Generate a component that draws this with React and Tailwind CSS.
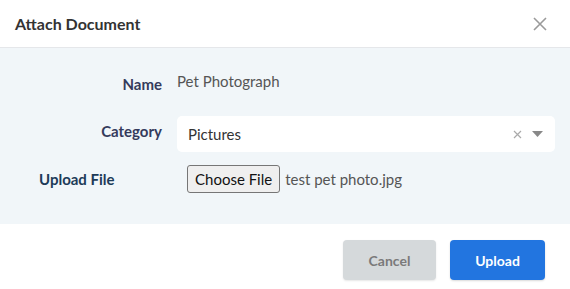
import React from "react";

export default function App() {
  return (
    <div className="w-[570px] h-[289px] bg-white flex flex-col" style={{ fontFamily: "Lato, 'Open Sans', sans-serif" }}>
      <div className="h-[48px] flex items-center justify-between pl-[15px] pr-[22px] border-b border-[#e5e7ea]">
        <div className="text-[16px] font-bold text-[#333] pt-[1px]">Attach Document</div>
        <svg width="16" height="16" viewBox="0 0 16 16" className="text-[#9a9a9a]">
          <path d="M2 2L14 14M14 2L2 14" stroke="currentColor" strokeWidth="1.6" />
        </svg>
      </div>
      <div className="h-[176px] bg-[#f1f6f9] flex flex-col pt-[20px]">
        <div className="flex items-center h-[30px]">
          <div className="w-[162px] text-right text-[15px] font-bold text-[#353b5c] pt-[2px]">Name</div>
          <div className="ml-[15px] text-[15px] text-[#555] -mt-[4px]">Pet Photograph</div>
        </div>
        <div className="flex items-center mt-[18px]">
          <div className="w-[162px] text-right text-[15px] font-bold text-[#353b5c] -mt-[6px]">Category</div>
          <div className="ml-[15px] w-[378px] h-[36px] bg-white rounded-[5px] flex items-center pl-[11px] pr-[12px]">
            <span className="text-[15px] text-[#333] flex-1">Pictures</span>
            <svg width="9" height="9" viewBox="0 0 9 9" className="text-[#aaa]">
              <path d="M1 1L8 8M8 1L1 8" stroke="currentColor" strokeWidth="1.2" />
            </svg>
            <svg width="11" height="6" viewBox="0 0 11 6" className="ml-[10px] text-[#888]">
              <path d="M0 0H11L5.5 6Z" fill="currentColor" />
            </svg>
          </div>
        </div>
        <div className="flex items-center mt-[13px]">
          <div className="pl-[39px] w-[177px] text-[15px] font-bold text-[#1d3b58]">Upload File</div>
          <div className="ml-[10px] flex items-center">
            <span className="h-[28px] px-[7px] flex items-center border border-[#767676] rounded-[3px] bg-[#efefef] text-[15px] text-[#111]">Choose File</span>
            <span className="ml-[5px] text-[15px] text-[#555]">test pet photo.jpg</span>
          </div>
        </div>
      </div>
      <div className="flex-1 flex items-start justify-end pr-[25px] gap-[14px] pt-[16px]">
        <button className="w-[93px] h-[40px] rounded-[4px] bg-[#d5d9db] text-[14px] font-bold text-[#7a7a7a] shadow-[0_1px_2px_rgba(0,0,0,0.1)]">Cancel</button>
        <button className="w-[95px] h-[40px] rounded-[4px] bg-[#2275e0] text-[14px] font-bold text-white shadow-[0_1px_2px_rgba(0,0,0,0.15)]">Upload</button>
      </div>
    </div>
  );
}
